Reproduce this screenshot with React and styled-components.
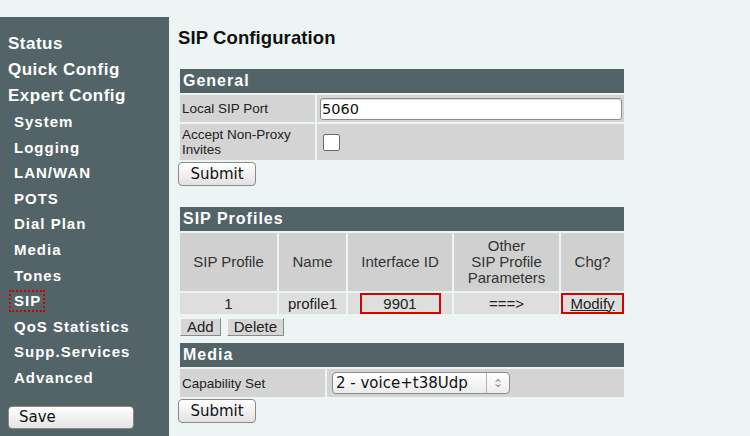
import React from "react";
import styled, { createGlobalStyle } from "styled-components";

const GlobalStyle = createGlobalStyle`
  html, body {
    margin: 0;
    padding: 0;
    background: #edf4f4;
  }
  body {
    font-family: "Liberation Sans", Arial, sans-serif;
  }
`;

const Page = styled.div`
  display: flex;
  align-items: stretch;
  min-height: 100vh;
  padding-top: 17px;
  box-sizing: border-box;
`;

const Sidebar = styled.nav`
  width: 169px;
  flex-shrink: 0;
  background: #536469;
  padding: 14px 0 0 8px;
  box-sizing: border-box;
`;

const NavTop = styled.div`
  color: #fff;
  font-weight: bold;
  font-size: 17px;
  letter-spacing: 0.5px;
  line-height: 26px;
  height: 26px;
`;

const NavSub = styled.div`
  color: #fff;
  font-weight: bold;
  font-size: 15px;
  letter-spacing: 1px;
  line-height: 25.6px;
  height: 25.6px;
  padding-left: 6px;
`;

const Active = styled.span`
  display: inline-block;
  line-height: 18px;
  padding: 0 2px 0 3px;
  margin-left: -5px;
  border: 2px dotted #d40000;
`;

const SaveButton = styled.button`
  margin-top: 15px;
  width: 126px;
  height: 23px;
  padding: 0 0 0 10px;
  text-align: left;
  font-family: "DejaVu Sans", sans-serif;
  font-size: 15px;
  color: #111;
  background: linear-gradient(#ffffff, #e4e4e4);
  border: 1px solid #8a8a8a;
  border-radius: 4px;
`;

const Main = styled.main`
  margin-left: 9px;
  width: 448px;
`;

const Title = styled.h1`
  margin: 10px 0 18px 0;
  font-size: 18.5px;
  line-height: 22px;
  font-weight: bold;
  letter-spacing: 0.1px;
  color: #111;
`;

const Table = styled.table`
  width: 448px;
  border-spacing: 2px;
  border-collapse: separate;
  table-layout: fixed;
  margin-top: ${(p) => p.$top || 0}px;
`;

const Bar = styled.th`
  background: #536469;
  color: #fff;
  text-align: left;
  font-size: 16px;
  letter-spacing: 1px;
  font-weight: bold;
  height: 24px;
  padding: 0 0 0 3px;
`;

const Label = styled.td`
  background: #d4d4d4;
  color: #222;
  font-size: 13.5px;
  line-height: 15px;
  padding: 3px 2px;
  height: ${(p) => p.$h}px;
  box-sizing: border-box;
  vertical-align: middle;
`;

const Field = styled.td`
  background: #d4d4d4;
  padding: 0 2px 0 3px;
  vertical-align: middle;
`;

const TextInput = styled.input`
  display: block;
  width: 100%;
  height: 22px;
  box-sizing: border-box;
  font-family: "DejaVu Sans", sans-serif;
  font-size: 14.5px;
  color: #111;
  padding: 0 1px;
  background: #fff;
  border: 1px solid #8c8c8c;
  border-radius: 3px;
  box-shadow: inset 0 1px 1px rgba(0, 0, 0, 0.15);
`;

const Check = styled.span`
  display: block;
  width: 15px;
  height: 15px;
  margin-left: 3px;
  background: #fff;
  border: 1px solid #6a6a6a;
  border-radius: 2px;
`;

const Button = styled.button`
  display: block;
  margin: ${(p) => p.$top || 0}px 0 0 0;
  width: 78px;
  height: 24px;
  padding: 0;
  font-family: "DejaVu Sans", sans-serif;
  font-size: 15px;
  color: #111;
  background: linear-gradient(#ffffff, #e2e2e2);
  border: 1px solid #8a8a8a;
  border-radius: 4px;
`;

const ColHead = styled.td`
  background: #d0d0d0;
  color: #333;
  font-size: 15px;
  line-height: 16px;
  text-align: center;
  height: 58px;
  padding: 0;
`;

const DataCell = styled.td`
  background: #dedede;
  color: #222;
  font-size: 15px;
  text-align: center;
  height: 21px;
  padding: 0;
`;

const Marked = styled.span`
  display: block;
  box-sizing: border-box;
  width: ${(p) => p.$w}px;
  height: 21px;
  line-height: 18px;
  margin: -1px auto 0 auto;
  border: 2px solid #d80000;
`;

const Link = styled.a`
  color: #222;
  text-decoration: underline;
`;

const ButtonRow = styled.div`
  display: flex;
  gap: 6px;
  margin: 2px 0 0 2px;
`;

const FlatButton = styled.button`
  height: 18px;
  padding: 0 6px;
  font-family: "Liberation Sans", Arial, sans-serif;
  font-size: 15px;
  line-height: 14px;
  color: #222;
  background: #d6d6d6;
  border: 1px solid;
  border-color: #f4f4f4 #8a8a8a #8a8a8a #f4f4f4;
  border-radius: 0;
`;

const Select = styled.div`
  display: flex;
  align-items: center;
  width: 178px;
  height: 22px;
  box-sizing: border-box;
  margin-left: 2px;
  background: linear-gradient(#ffffff, #ececec);
  border: 1px solid #8c8c8c;
  border-radius: 4px;
  font-family: "DejaVu Sans", sans-serif;
  font-size: 15px;
  color: #111;
`;

const SelectText = styled.span`
  flex: 1;
  padding-left: 3px;
  white-space: nowrap;
`;

const SelectArrow = styled.span`
  width: 22px;
  height: 100%;
  border-left: 1px solid #b4b4b4;
  display: flex;
  align-items: center;
  justify-content: center;
`;

const Chevrons = () => (
  <svg width="6" height="10" viewBox="0 0 6 10" fill="none" stroke="#444" strokeWidth="1">
    <path d="M1 3.5 L3 1.5 L5 3.5" />
    <path d="M1 6.5 L3 8.5 L5 6.5" />
  </svg>
);

const subItems = [
  "System",
  "Logging",
  "LAN/WAN",
  "POTS",
  "Dial Plan",
  "Media",
  "Tones",
  "SIP",
  "QoS Statistics",
  "Supp.Services",
  "Advanced",
];

export default function App() {
  return (
    <>
      <GlobalStyle />
      <Page>
        <Sidebar>
          <NavTop>Status</NavTop>
          <NavTop>Quick Config</NavTop>
          <NavTop>Expert Config</NavTop>
          {subItems.map((item) => (
            <NavSub key={item}>
              {item === "SIP" ? <Active>SIP</Active> : item}
            </NavSub>
          ))}
          <SaveButton>Save</SaveButton>
        </Sidebar>

        <Main>
          <Title>SIP Configuration</Title>

          {/* General */}
          <Table>
            <colgroup>
              <col style={{ width: 135 }} />
              <col />
            </colgroup>
            <thead>
              <tr>
                <Bar colSpan={2}>General</Bar>
              </tr>
            </thead>
            <tbody>
              <tr>
                <Label $h={27}>Local SIP Port</Label>
                <Field>
                  <TextInput defaultValue="5060" />
                </Field>
              </tr>
              <tr>
                <Label $h={36}>
                  Accept Non-Proxy
                  <br />
                  Invites
                </Label>
                <Field>
                  <Check />
                </Field>
              </tr>
            </tbody>
          </Table>
          <Button $top={0}>Submit</Button>

          {/* SIP Profiles */}
          <Table $top={19}>
            <colgroup>
              <col style={{ width: 97 }} />
              <col style={{ width: 67 }} />
              <col style={{ width: 104 }} />
              <col style={{ width: 105 }} />
              <col />
            </colgroup>
            <thead>
              <tr>
                <Bar colSpan={5}>SIP Profiles</Bar>
              </tr>
            </thead>
            <tbody>
              <tr>
                <ColHead>SIP Profile</ColHead>
                <ColHead>Name</ColHead>
                <ColHead>Interface ID</ColHead>
                <ColHead>
                  Other
                  <br />
                  SIP Profile
                  <br />
                  Parameters
                </ColHead>
                <ColHead>Chg?</ColHead>
              </tr>
              <tr>
                <DataCell>1</DataCell>
                <DataCell>profile1</DataCell>
                <DataCell>
                  <Marked $w={81}>9901</Marked>
                </DataCell>
                <DataCell>===&gt;</DataCell>
                <DataCell>
                  <Marked $w={63}>
                    <Link href="#">Modify</Link>
                  </Marked>
                </DataCell>
              </tr>
            </tbody>
          </Table>
          <ButtonRow>
            <FlatButton>Add</FlatButton>
            <FlatButton>Delete</FlatButton>
          </ButtonRow>

          {/* Media */}
          <Table $top={5}>
            <colgroup>
              <col style={{ width: 145 }} />
              <col />
            </colgroup>
            <thead>
              <tr>
                <Bar colSpan={2}>Media</Bar>
              </tr>
            </thead>
            <tbody>
              <tr>
                <Label $h={28}>Capability Set</Label>
                <Field>
                  <Select>
                    <SelectText>2 - voice+t38Udp</SelectText>
                    <SelectArrow>
                      <Chevrons />
                    </SelectArrow>
                  </Select>
                </Field>
              </tr>
            </tbody>
          </Table>
          <Button $top={0}>Submit</Button>
        </Main>
      </Page>
    </>
  );
}
